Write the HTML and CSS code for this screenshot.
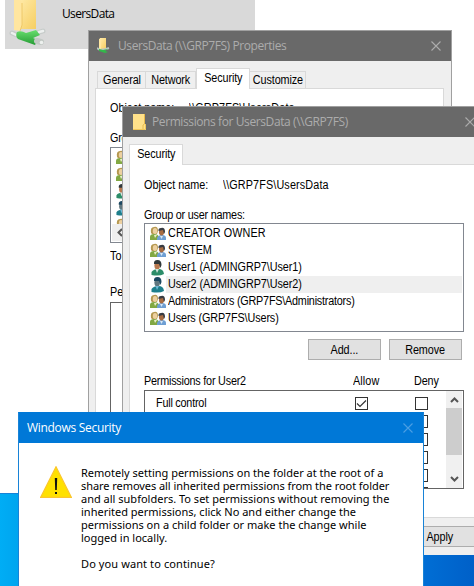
FILE: index.html
```html
<!DOCTYPE html>
<html lang="en">
<head>
<meta charset="utf-8">
<title>Windows Security</title>
<link rel="stylesheet" href="styles.css">
</head>
<body>
<svg class="defs" width="0" height="0">
  <defs>
    <linearGradient id="fold" x1="0" y1="0" x2="1" y2="1"><stop offset="0" stop-color="#ffebaa"/><stop offset="1" stop-color="#f6ce62"/></linearGradient>
    <linearGradient id="pipe" x1="0" y1="0" x2="0" y2="1"><stop offset="0" stop-color="#69df6e"/><stop offset="1" stop-color="#259b35"/></linearGradient>
  </defs>
  <symbol id="group" viewBox="0 0 16 15">
    <path d="M0 14V11Q0 8 4 8Q8 8 9 11V14Z" fill="#82a843"/>
    <path d="M1 7Q0 1 4 1Q8 0 8 5L7 8H2Z" fill="#b59850"/>
    <ellipse cx="5" cy="5" rx="2.2" ry="3" fill="#ecd0a0"/>
    <path d="M4 9L5 12L7 9Z" fill="#e9efc8"/>
    <path d="M7 14V12Q8 9 12 9Q16 9 16 12V14Z" fill="#6f9fd3"/>
    <ellipse cx="11.5" cy="6" rx="2.6" ry="3.4" fill="#a86c42"/>
    <path d="M8.5 5Q8 2 11 2Q15 1 15 6L14 8L13 4Z" fill="#373b42"/>
    <path d="M10 10L11.5 13L13 10Z" fill="#d7e7f5"/>
  </symbol>
  <symbol id="user" viewBox="0 0 13 16">
    <path d="M0 15V12Q2 9 7 9Q12 9 12.500 14Q8 16.500 0 15Z" fill="#2c8d69"/>
    <ellipse cx="5.7" cy="5.6" rx="2.8" ry="4" fill="#b9794e"/>
    <path d="M2.5 4Q2 0 6 0Q10 0 10 5L9 8L7.5 4Z" fill="#30383a"/>
    <path d="M4 9L5.5 13L7.5 9Z" fill="#d0e4dc"/>
  </symbol>
  <symbol id="userSel" viewBox="0 0 13 16">
    <path d="M0 15V12Q2 9 7 9Q12 9 12.500 14Q8 16.500 0 15Z" fill="#1e7f8c"/>
    <ellipse cx="5.7" cy="5.6" rx="2.8" ry="4" fill="#60777f"/>
    <path d="M2.5 4Q2 0 6 0Q10 0 10 5L9 8L7.5 4Z" fill="#1c4861"/>
    <path d="M4 9L5.5 13L7.5 9Z" fill="#71b8d5"/>
  </symbol>
  <symbol id="close" viewBox="0 0 10 10"><path d="M.5 .5L9.500 9.500M9.500 .5L.5 9.500" fill="none" stroke="currentColor" stroke-width="1.1"/></symbol>
</svg>

<main class="desktop">
  <div class="explorer">
    <div class="file">
      <svg class="share" width="42" height="49" viewBox="0 0 42 49">
        <path d="M13 0H31V29L14 29Z" fill="url(#fold)"/>
        <path d="M9 0H15L17 3V25L15 31L9 30Z" fill="#ffe6a0"/><path d="M17 3V25L15 31" fill="none" stroke="#e8bd57" stroke-width=".7"/>
        <path d="M7 33L14 36M32 33L38 31" stroke="#c7ccca" stroke-width="5" stroke-linecap="round"/>
        <path d="M7 33L11 35M34 32L38 31" stroke="#edf0ef" stroke-width="2.500" stroke-linecap="round"/>
        <path d="M12 32Q16 30 21 33L31 30L35 35L28 38L33 40L30 45L13 39Q10 36 12 32Z" fill="url(#pipe)"/>
        <path d="M32 41L36 42" stroke="#c3c9c5" stroke-width="6" stroke-linecap="round"/><circle cx="36.500" cy="42.500" r="1.800" fill="#eef1ef"/>
      </svg>
      <span class="file-name">UsersData</span>
    </div>
  </div>

  <section class="win props">
    <header class="bar">
      <svg width="13" height="16" viewBox="0 0 13 16"><path d="M3 0H9V11H3Z" fill="url(#fold)"/><path d="M2 1L4 0V12H2Z" fill="#ffe6a0"/><path d="M0 10L3 12L9 11L12 10" stroke="#b7c6c0" stroke-width="2" fill="none"/><path d="M2 11L6 12L11 11L8 13L11 14L8 15L2 13Z" fill="#32b94a"/></svg>
      <span class="bar-title">UsersData (\\GRP7FS) Properties</span>
      <svg class="x" width="10" height="10"><use href="#close"/></svg>
    </header>
    <nav class="tabs">
      <div class="tab w-gen"><span class="t mid">General</span></div>
      <div class="tab w-net"><span class="t mid">Network</span></div>
      <div class="tab on w-sec"><span class="t mid">Security</span></div>
      <div class="tab w-cus"><span class="t mid">Customize</span></div>
    </nav>
    <div class="panel">
      <p class="line obj"><span class="t key">Object name:</span><span class="t path">\\GRP7FS\UsersData</span></p>
      <p class="line grp"><span class="t">Group or user names:</span></p>
      <div class="back-list">
        <svg width="16" height="15"><use href="#group"/></svg>
        <svg width="16" height="15"><use href="#group"/></svg>
        <svg width="13" height="15"><use href="#user"/></svg>
        <svg width="13" height="15"><use href="#userSel"/></svg>
        <svg width="16" height="15"><use href="#group"/></svg>
        <div class="hscroll"><svg width="6" height="9" viewBox="0 0 6 9"><path d="M5 1L1.5 4.5L5 8" fill="none" stroke="#555" stroke-width="2"/></svg></div>
      </div>
      <p class="line edit"><span class="t n1">To</span></p>
      <p class="line perm"><span class="t n1">Permissions</span></p>
      <div class="back-perms"></div>
    </div>
  </section>

  <section class="win perms">
    <header class="bar">
      <svg width="13" height="16" viewBox="0 0 13 16"><path d="M0 0H12V11L13 12V16H0Z" fill="#ffe18a"/><path d="M11.5 0V10L10 11V15.5" fill="none" stroke="#e9ba4b"/><path d="M0 15.5H12.5V10" fill="none" stroke="#efc65b"/></svg>
      <span class="bar-title">Permissions for UsersData (\\GRP7FS)</span>
      <svg class="x" width="10" height="10"><use href="#close"/></svg>
    </header>
    <nav class="tabs"><div class="tab on w-sec"><span class="t mid">Security</span></div></nav>
    <div class="panel">
      <p class="line obj"><span class="t key">Object name:</span><span class="t path">\\GRP7FS\UsersData</span></p>
      <p class="line grp"><span class="t">Group or user names:</span></p>
      <ul class="names">
        <li><svg width="16" height="15"><use href="#group"/></svg><div class="name"><span class="t n1">CREATOR OWNER</span></div></li>
        <li><svg width="16" height="15"><use href="#group"/></svg><div class="name"><span class="t n2">SYSTEM</span></div></li>
        <li><svg width="16" height="16"><use href="#user"/></svg><div class="name"><span class="t n3">User1 (ADMINGRP7\User1)</span></div></li>
        <li><svg width="16" height="16"><use href="#userSel"/></svg><div class="name sel"><span class="t n3">User2 (ADMINGRP7\User2)</span></div></li>
        <li><svg width="16" height="15"><use href="#group"/></svg><div class="name"><span class="t">Administrators (GRP7FS\Administrators)</span></div></li>
        <li><svg width="16" height="15"><use href="#group"/></svg><div class="name"><span class="t n2">Users (GRP7FS\Users)</span></div></li>
      </ul>
      <div class="buttons"><div class="btn"><span class="t mid">Add...</span></div><div class="btn"><span class="t mid">Remove</span></div></div>
      <div class="heads"><div class="h-name"><span class="t">Permissions for User2</span></div><div class="h-allow"><span class="t n1">Allow</span></div><div><span class="t n2">Deny</span></div></div>
      <div class="grid">
        <div class="rows">
          <div class="row"><div class="what"><span class="t">Full control</span></div><span class="box"><svg width="11" height="11" viewBox="0 0 11 11"><path d="M1 5.5L4 8.5L10 2.5" fill="none" stroke="#333" stroke-width="1.2"/></svg></span><span class="box"></span></div>
          <div class="row"><div class="what"></div><span class="box"></span><span class="box"></span></div>
          <div class="row"><div class="what"></div><span class="box"></span><span class="box"></span></div>
          <div class="row"><div class="what"></div><span class="box"></span><span class="box"></span></div>
          <div class="row"><div class="what"></div><span class="box"></span><span class="box"></span></div>
          <div class="row"><div class="what"></div><span class="box"></span><span class="box"></span></div>
        </div>
        <div class="vscroll">
          <svg width="9" height="6" viewBox="0 0 9 6"><path d="M1 5L4.5 1.5L8 5" fill="none" stroke="#555" stroke-width="2"/></svg>
          <i class="thumb"></i>
          <svg width="9" height="6" viewBox="0 0 9 6"><path d="M1 1L4.5 4.5L8 1" fill="none" stroke="#555" stroke-width="2"/></svg>
        </div>
      </div>
    </div>
    <footer class="foot"><div class="btn"><span class="t mid">Apply</span></div></footer>
  </section>

  <section class="alert">
    <header class="alert-bar"><span class="alert-title">Windows Security</span><svg class="x" width="10" height="10"><use href="#close"/></svg></header>
    <div class="alert-body">
      <svg width="32" height="32" viewBox="0 0 32 32"><path d="M16 .8L31.3 31.3H.7Z" fill="#ffe100" stroke="#fbc62d" stroke-width="1.2"/><path d="M14.8 12H17.2L16.8 24H15.2ZM15 26H17V28H15Z" fill="#111"/></svg>
      <div class="msg">
        <p>Remotely setting permissions on the folder at the root of a</p>
        <p class="m2">share removes all inherited permissions from the root folder</p>
        <p>and all subfolders. To set permissions without removing the</p>
        <p>inherited permissions, click No and either change the</p>
        <p>permissions on a child folder or make the change while</p>
        <p>logged in locally.</p>
        <p class="ask">Do you want to continue?</p>
      </div>
    </div>
  </section>
</main>
</body>
</html>
```
FILE: styles.css
```css
* { box-sizing: border-box; }
body { margin: 0; overflow: hidden; font: 12px/16px "Liberation Sans", Arial, sans-serif; color: #000; }
p, ul { margin: 0; padding: 0; list-style: none; }
svg { display: block; flex: none; }
.defs { position: absolute; }
.desktop { position: relative; width: 474px; height: 586px; overflow: hidden; background: linear-gradient(90deg, #00adf5 0, #00a5ef 18px, #006fd6 420px, #0060c8 474px); }
.explorer { height: 494px; background: #fff; border-bottom: 1px solid #1883d7; padding-left: 5px; }
.file { display: flex; width: 250px; height: 49px; background: #d9d9d9; padding-left: 5px; }
.share { margin-left: -5px; }
.file-name { margin: 6px 0 0 15px; font: 12px/16px "Open Sans", sans-serif; letter-spacing: -.65px; }

/* condensed dialog lettering */
.t { display: inline-block; transform: scaleX(.9); transform-origin: 0 50%; letter-spacing: -.23px; }
.mid { transform-origin: 50% 50%; letter-spacing: -.1px; }
.n1 { letter-spacing: .12px; }
.n2 { letter-spacing: -.12px; }
.n3 { letter-spacing: -.06px; }

.win { position: absolute; background: #efefef; border: 1px solid #a0a0a0; overflow: hidden; white-space: nowrap; }
.props { left: 88px; top: 30px; width: 364px; height: 520px; }
.perms { left: 122px; top: 106px; width: 364px; height: 449px; border-bottom: 0; display: flex; flex-direction: column; }
.bar { display: flex; align-items: center; height: 30px; flex: none; background: #696969; color: #acacac; padding: 0 10px 0 8px; }
.bar-title { margin-left: 8px; font: 12px/16px "Open Sans", sans-serif; letter-spacing: -.42px; }
.perms .bar { padding-left: 10px; }
.perms .bar-title { margin-left: 6px; letter-spacing: -.4px; }
.x { margin-left: auto; }
.tabs { display: flex; align-items: flex-end; height: 28px; padding-left: 8px; flex: none; }
.perms .tabs { padding-left: 6px; }
.tab { display: flex; justify-content: center; height: 18px; border: 1px solid #d9d9d9; border-bottom: 0; border-left-width: 0; line-height: 17px; }
.tab:first-child { border-left-width: 1px; }
.tab.on { height: 21px; background: #fff; position: relative; border-left-width: 1px; line-height: 19px; }
.w-gen { width: 49px; }
.w-net { width: 50px; }
.w-sec { width: 54px; }
.w-cus { width: 56px; }
.panel { background: #fff; border: 1px solid #d9d9d9; }
.props .panel { margin: -1px 7px 0 6px; height: 500px; padding: 11px 0 0 14px; }
.perms .panel { margin: -1px 6px 0; height: 354px; flex: none; padding: 12px 0 0 14px; }
.line { height: 16px; }
.obj { display: flex; }
.key { width: 79px; letter-spacing: 0; }
.path { letter-spacing: .15px; }
.grp { margin-top: 14px; }
.back-list { margin-top: 1px; width: 330px; height: 96px; border: 1px solid #828790; padding: 2px 0 0 5px; display: flex; flex-direction: column; gap: 2px; overflow: hidden; }
.hscroll { flex: none; height: 17px; margin: -11px 0 0 -4px; padding: 4px 0 0 5px; background: #efefef; position: relative; }
.edit { margin-top: 5px; }
.props .perm { margin-top: 20px; }
.back-perms { margin-top: 2px; width: 330px; height: 200px; border: 1px solid #646464; }

.names { width: 320px; height: 109px; border: 1px solid #828790; padding: 1px; }
.names li { display: flex; align-items: center; height: 17px; padding-left: 4px; }
.name { flex: 1; height: 17px; line-height: 17px; padding-left: 2px; }
.sel { background: #efefef; }
.buttons { display: flex; gap: 8px; margin: 7px 0 0 164px; }
.btn { display: flex; justify-content: center; width: 73px; height: 21px; border: 1px solid #adadad; background: #e1e1e1; line-height: 20px; }
.heads { display: flex; margin-top: 13px; height: 16px; }
.h-name { width: 209px; }
.h-allow { width: 61px; }
.grid { display: flex; margin-top: 1px; width: 320px; height: 99px; border: 1px solid #646464; overflow: hidden; }
.rows { flex: 1; min-width: 0; padding: 3px 0 0 11px; }
.row { display: flex; align-items: center; height: 18px; }
.what { width: 199px; }
.box { width: 13px; height: 13px; border: 1px solid #333; margin-right: 47px; flex: none; }
.rows .box:last-child { margin-right: 0; }
.vscroll { width: 16px; margin-right: 1px; flex: none; background: #f0f0f0; display: flex; flex-direction: column; align-items: center; padding: 6px 0; overflow: hidden; }
.thumb { width: 16px; height: 47px; margin-top: 5px; background: #cdcdcd; }
.vscroll svg:last-child { margin-top: auto; }
.foot { padding: 8px 0 0 280px; }

.alert { position: absolute; left: 18px; top: 412px; width: 406px; height: 190px; background: #fff; border: 1px solid #1883d7; border-top-color: #0078d7; font-family: "Open Sans", sans-serif; white-space: nowrap; }
.alert-bar { display: flex; align-items: center; height: 30px; background: #0078d7; color: #fff; padding: 0 10px 0 8px; }
.alert-title { font-size: 12px; letter-spacing: -.3px; }
.alert-bar .x { color: #4b9fe3; }
.alert-body { display: flex; padding: 23px 0 0 21px; }
.msg { margin: 0 0 0 9px; font: 11px/13px "Noto Sans", sans-serif; }
.m2 { letter-spacing: -.06px; }
.ask { margin-top: 13px; letter-spacing: .1px; }
```
